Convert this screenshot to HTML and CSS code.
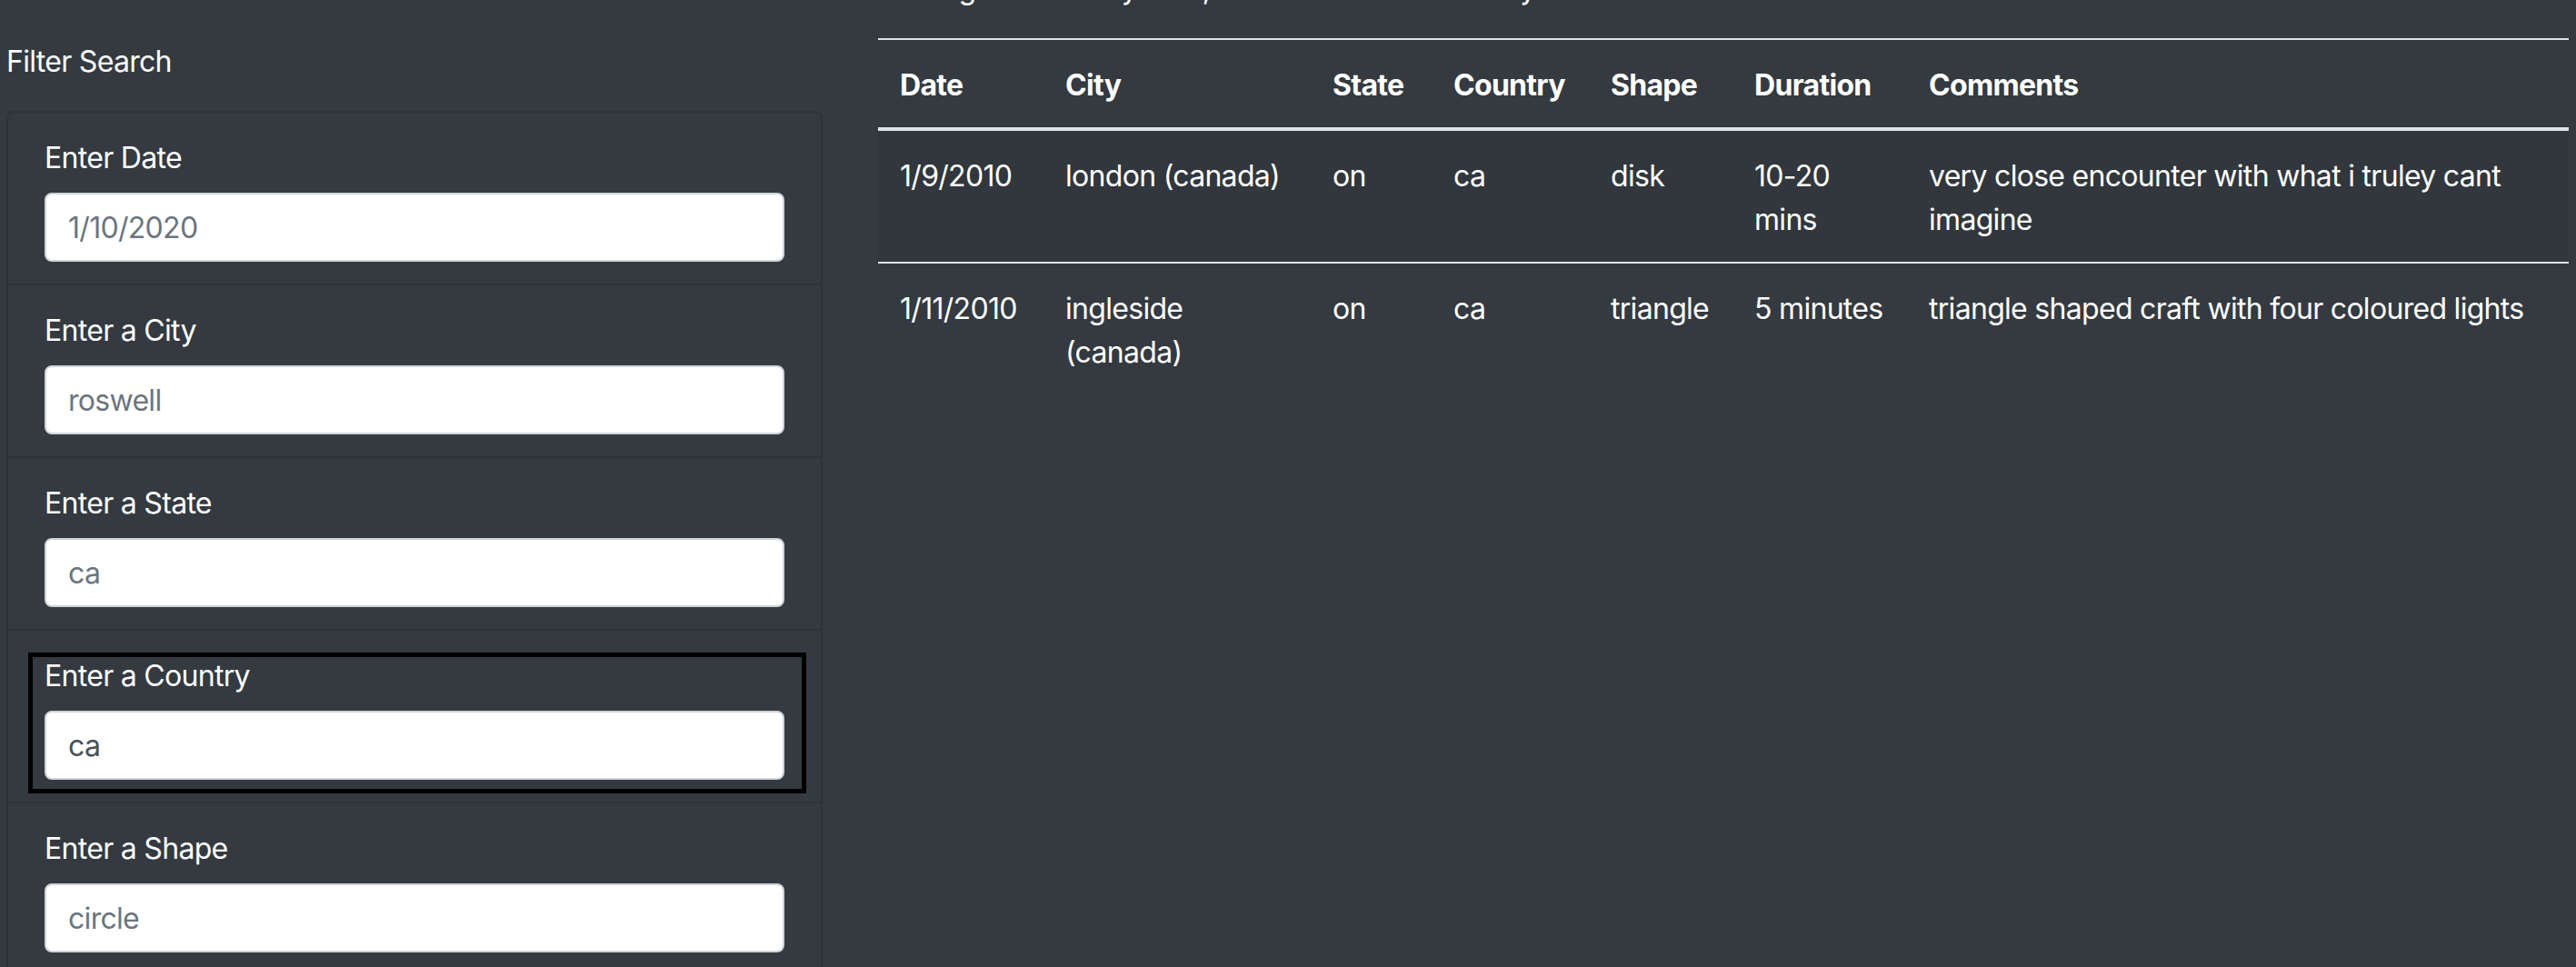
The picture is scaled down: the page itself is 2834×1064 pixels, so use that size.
FILE: index.html
```html
<!DOCTYPE html>
<html lang="en">
<head>
<meta charset="utf-8">
<title>UFO Sightings</title>
<link rel="stylesheet" href="styles.css">
</head>
<body>
<div class="layout">
  <aside class="filters">
    <p class="filter-title">Filter Search</p>
    <ul class="list-group">
      <li class="list-group-item">
        <div class="field">
          <label for="datetime">Enter Date</label>
          <input class="form-control" id="datetime" type="text" placeholder="1/10/2020">
        </div>
      </li>
      <li class="list-group-item">
        <div class="field">
          <label for="city">Enter a City</label>
          <input class="form-control" id="city" type="text" placeholder="roswell">
        </div>
      </li>
      <li class="list-group-item">
        <div class="field">
          <label for="state">Enter a State</label>
          <input class="form-control" id="state" type="text" placeholder="ca">
        </div>
      </li>
      <li class="list-group-item">
        <div class="field field-focused">
          <label for="country">Enter a Country</label>
          <input class="form-control" id="country" type="text" placeholder="ca" value="ca">
        </div>
      </li>
      <li class="list-group-item">
        <div class="field">
          <label for="shape">Enter a Shape</label>
          <input class="form-control" id="shape" type="text" placeholder="circle">
        </div>
      </li>
    </ul>
  </aside>
  <main class="results">
    <p class="intro">Using the table by date, the results are sorted by</p>
    <table class="table">
      <colgroup>
        <col class="c-date">
        <col class="c-city">
        <col class="c-state">
        <col class="c-country">
        <col class="c-shape">
        <col class="c-duration">
        <col class="c-comments">
      </colgroup>
      <thead>
        <tr>
          <th>Date</th>
          <th>City</th>
          <th>State</th>
          <th>Country</th>
          <th>Shape</th>
          <th>Duration</th>
          <th>Comments</th>
        </tr>
      </thead>
      <tbody>
        <tr class="odd">
          <td>1/9/2010</td>
          <td>london (canada)</td>
          <td>on</td>
          <td>ca</td>
          <td>disk</td>
          <td>10-20 mins</td>
          <td>very close encounter with what i truley cant imagine</td>
        </tr>
        <tr>
          <td>1/11/2010</td>
          <td>ingleside (canada)</td>
          <td>on</td>
          <td>ca</td>
          <td>triangle</td>
          <td>5 minutes</td>
          <td>triangle shaped craft with four coloured lights</td>
        </tr>
      </tbody>
    </table>
  </main>
</div>
</body>
</html>
```
FILE: styles.css
```css
* {
  box-sizing: border-box;
}

html, body {
  margin: 0;
  background: #343a40;
  color: #ffffff;
  font-family: Inter, "Liberation Sans", Arial, sans-serif;
  font-size: 32px;
  line-height: 48px;
  letter-spacing: -0.7px;
}

body {
  overflow: hidden;
}

.layout {
  display: flex;
  align-items: flex-start;
  gap: 61px;
  padding: 44px 0 0 7px;
}

.filters {
  width: 898px;
  flex: 0 0 898px;
}

.filter-title {
  margin: 0 0 30px;
}

.list-group {
  list-style: none;
  margin: 0;
  padding: 0;
  border: 2px solid #2e3338;
  border-radius: 8px;
}

.list-group-item {
  padding: 24px 40px;
  border-top: 2px solid #2e3338;
}

.list-group-item:first-child {
  border-top: 0;
}

.field {
  position: relative;
}

.field label {
  display: block;
  padding-top: 2px;
  margin-bottom: 14px;
}

.field-focused::after {
  content: "";
  position: absolute;
  top: 0;
  left: -18px;
  right: -24px;
  bottom: -15px;
  border: 5px solid #000000;
  pointer-events: none;
}

.form-control {
  display: block;
  width: 100%;
  height: 76px;
  padding: 12px 24px;
  font-family: inherit;
  font-size: 32px;
  line-height: 48px;
  letter-spacing: -0.7px;
  color: #495057;
  background: #ffffff;
  border: 2px solid #ced4da;
  border-radius: 8px;
  outline: none;
}

.form-control::placeholder {
  color: #6c757d;
  opacity: 1;
}

.results {
  width: 1860px;
  flex: 0 0 1860px;
}

.intro {
  margin: -80px 0 30px 24px;
  white-space: nowrap;
}

.table {
  width: 1860px;
  table-layout: fixed;
  border-collapse: collapse;
  color: #ffffff;
}

.c-date { width: 182px; }
.c-city { width: 294px; }
.c-state { width: 133px; }
.c-country { width: 173px; }
.c-shape { width: 158px; }
.c-duration { width: 192px; }
.c-comments { width: 728px; }

.table th,
.table td {
  padding: 26px 24px 22px;
  text-align: left;
  border-top: 2px solid #dee2e6;
}

.table th {
  font-weight: 700;
  vertical-align: bottom;
  border-bottom: 4px solid #dee2e6;
}

.table td {
  vertical-align: top;
  font-weight: 400;
}

.table tbody tr.odd {
  background: rgba(0, 0, 0, 0.05);
}
```
